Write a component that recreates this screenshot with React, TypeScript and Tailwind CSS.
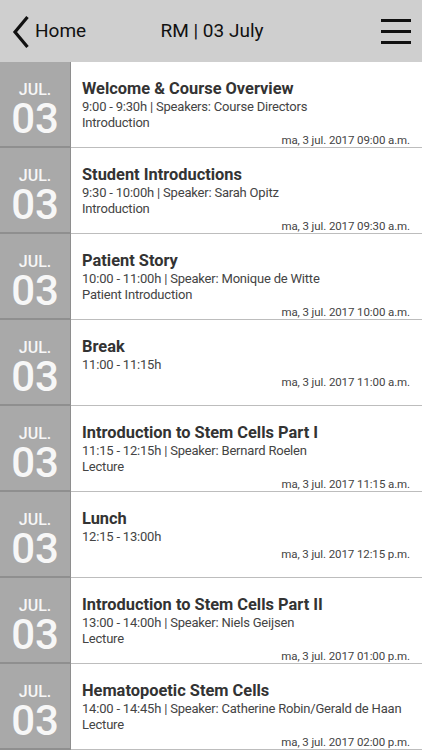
import React from 'react';

type Session = {
  title: string;
  time: string;
  type?: string;
  stamp: string;
};

const sessions: Session[] = [
  { title: 'Welcome & Course Overview', time: '9:00 - 9:30h | Speakers: Course Directors', type: 'Introduction', stamp: 'ma, 3 jul. 2017 09:00 a.m.' },
  { title: 'Student Introductions', time: '9:30 - 10:00h | Speaker: Sarah Opitz', type: 'Introduction', stamp: 'ma, 3 jul. 2017 09:30 a.m.' },
  { title: 'Patient Story', time: '10:00 - 11:00h | Speaker: Monique de Witte', type: 'Patient Introduction', stamp: 'ma, 3 jul. 2017 10:00 a.m.' },
  { title: 'Break', time: '11:00 - 11:15h', stamp: 'ma, 3 jul. 2017 11:00 a.m.' },
  { title: 'Introduction to Stem Cells Part I', time: '11:15 - 12:15h | Speaker: Bernard Roelen', type: 'Lecture', stamp: 'ma, 3 jul. 2017 11:15 a.m.' },
  { title: 'Lunch', time: '12:15 - 13:00h', stamp: 'ma, 3 jul. 2017 12:15 p.m.' },
  { title: 'Introduction to Stem Cells Part II', time: '13:00 - 14:00h | Speaker: Niels Geijsen', type: 'Lecture', stamp: 'ma, 3 jul. 2017 01:00 p.m.' },
  { title: 'Hematopoetic Stem Cells', time: '14:00 - 14:45h | Speaker: Catherine Robin/Gerald de Haan', type: 'Lecture', stamp: 'ma, 3 jul. 2017 02:00 p.m.' },
];

const SessionRow: React.FC<{ s: Session }> = ({ s }) => (
  <div className="flex h-[86px] shrink-0">
    {/* datum */}
    <div className="w-[71px] shrink-0 bg-[#a9a9a9] border-r border-r-[#8e8e8e] border-b-2 border-b-[#8f8f8f] flex flex-col items-center text-[#f7f7f7]">
      <div className="mt-[20px] text-[16px] leading-[16px] font-medium">JUL.</div>
      <div className="mt-[2px] text-[42px] leading-[38px] font-medium">03</div>
    </div>
    {/* inhoud */}
    <div className="flex-1 flex flex-col bg-white border-b border-b-[#bdbdbd] pl-[11px] pr-[8px] pt-[16px]">
      <div className="text-[16.4px] leading-[21px] font-bold text-[#333333]">{s.title}</div>
      <div className="text-[13px] leading-[16px] tracking-[-0.2px] text-[#444444] whitespace-nowrap">{s.time}</div>
      {s.type && <div className="text-[13px] leading-[16px] tracking-[-0.2px] text-[#444444]">{s.type}</div>}
      <div className="text-right text-[11.5px] leading-[17px] tracking-[-0.1px] text-[#444444] mt-[1px] pr-[4px]">{s.stamp}</div>
    </div>
  </div>
);

export default function App() {
  return (
    <div className="w-[422px] h-[750px] overflow-hidden flex flex-col bg-white" style={{ fontFamily: 'Roboto, "Liberation Sans", sans-serif' }}>
      {/* header */}
      <div className="h-[62px] shrink-0 bg-[#cfcfcf] flex items-center relative">
        <div className="flex items-center pl-[11px]">
          <svg width="20" height="34" viewBox="0 0 20 34" className="mt-[1px]">
            <path d="M16.5 2 L4 17 L16.5 32" fill="none" stroke="#111" strokeWidth="3.2" />
          </svg>
          <span className="ml-[4px] text-[19px] text-[#111]">Home</span>
        </div>
        <div className="absolute left-0 right-0 text-center text-[19px] text-[#111] pointer-events-none pl-[2px]">RM | 03 July</div>
        <div className="ml-auto pr-[11px] flex flex-col gap-[8px]">
          <div className="w-[30px] h-[3px] bg-[#111]" />
          <div className="w-[30px] h-[3px] bg-[#111]" />
          <div className="w-[30px] h-[3px] bg-[#111]" />
        </div>
      </div>
      {sessions.map((s, i) => (
        <SessionRow key={i} s={s} />
      ))}
    </div>
  );
}
